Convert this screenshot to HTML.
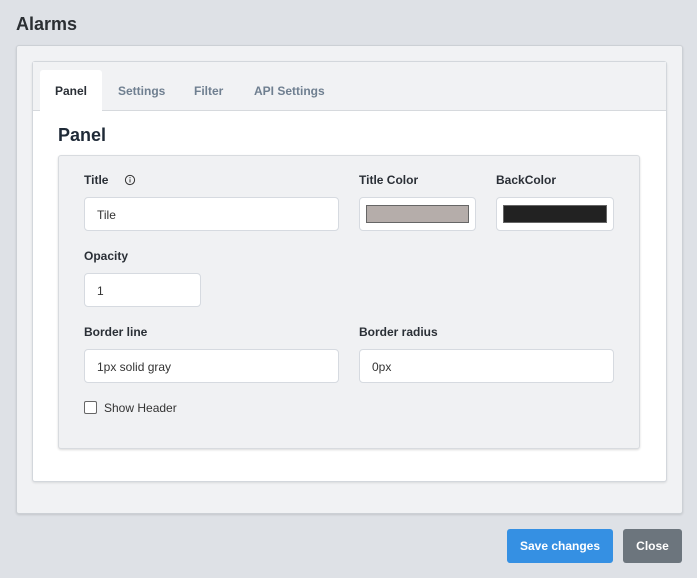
<!DOCTYPE html>
<html><head><style>
*{box-sizing:border-box;margin:0;padding:0}
body{width:697px;height:578px;background:#dee1e6;font-family:"Liberation Sans",sans-serif;position:relative;overflow:hidden;color:#212529}
.a{position:absolute}
h1{position:absolute;left:16px;top:14px;font-size:18px;font-weight:bold;color:#2b2f33}
.outer{left:16px;top:45px;width:667px;height:469px;background:#f1f2f4;border:1px solid #ccd0d5;border-radius:3px;box-shadow:0 1px 2px rgba(0,0,0,.12)}
.inner{left:32px;top:61px;width:635px;height:421px;background:#fff;border:1px solid #d3d7dc;border-radius:3px;box-shadow:0 1px 2px rgba(0,0,0,.1)}
.tabs{left:33px;top:62px;width:633px;height:49px;background:#f1f2f4;border-bottom:1px solid #d6d9dd}
.tab{position:absolute;top:84px;font-size:12px;font-weight:bold;color:#6f7f90}
.act{left:40px;top:70px;width:62px;height:41px;background:#fff;border-radius:3px 3px 0 0}
.fs{left:58px;top:155px;width:582px;height:294px;background:#f0f1f3;border:1px solid #d8dbdf;border-radius:3px;box-shadow:0 1px 2px rgba(0,0,0,.15)}
.lbl{position:absolute;font-size:12px;font-weight:bold;color:#2a2f36}
.inp{position:absolute;height:34px;background:#fff;border:1px solid #d6dae0;border-radius:4px;font-size:12px;padding:10px 12px;color:#333}
.sw{position:absolute;left:6px;top:7px;right:6px;bottom:7px;border:1px solid #666}
.btn{position:absolute;top:529px;height:34px;border-radius:3px;color:#fff;font-size:12px;font-weight:bold;text-align:center;line-height:34px}
</style></head><body>
<h1>Alarms</h1>
<div class="a outer"></div>
<div class="a inner"></div>
<div class="a tabs"></div>
<div class="a act"></div>
<div class="tab" style="left:55px;color:#2a2f36">Panel</div>
<div class="tab" style="left:118px">Settings</div>
<div class="tab" style="left:194px">Filter</div>
<div class="tab" style="left:254px">API Settings</div>
<div class="a" style="left:58px;top:125px;font-size:18px;font-weight:bold;color:#1f2a37">Panel</div>
<div class="a fs"></div>
<div class="lbl" style="left:84px;top:173px">Title</div>
<svg class="a" style="left:124px;top:174px" width="12" height="12" viewBox="0 0 12 12"><circle cx="6" cy="6" r="4.6" fill="none" stroke="#333" stroke-width="1"/><line x1="6" y1="5.3" x2="6" y2="8.5" stroke="#333"/><circle cx="6" cy="3.7" r=".6" fill="#333"/></svg>
<div class="inp" style="left:84px;top:197px;width:255px">Tile</div>
<div class="lbl" style="left:359px;top:173px">Title Color</div>
<div class="inp" style="left:359px;top:197px;width:117px"><div class="sw" style="background:#b5adaa"></div></div>
<div class="lbl" style="left:496px;top:173px">BackColor</div>
<div class="inp" style="left:496px;top:197px;width:118px"><div class="sw" style="background:#222"></div></div>
<div class="lbl" style="left:84px;top:249px">Opacity</div>
<div class="inp" style="left:84px;top:273px;width:117px">1</div>
<div class="lbl" style="left:84px;top:325px">Border line</div>
<div class="inp" style="left:84px;top:349px;width:255px">1px solid gray</div>
<div class="lbl" style="left:359px;top:325px">Border radius</div>
<div class="inp" style="left:359px;top:349px;width:255px">0px</div>
<div class="a" style="left:84px;top:401px;width:13px;height:13px;border:1px solid #666;border-radius:2px;background:#fff"></div>
<div class="a" style="left:104px;top:401px;font-size:12px;color:#333">Show Header</div>
<div class="btn" style="left:507px;width:106px;background:#3590e3">Save changes</div>
<div class="btn" style="left:623px;width:59px;background:#6c757d">Close</div>
</body></html>
